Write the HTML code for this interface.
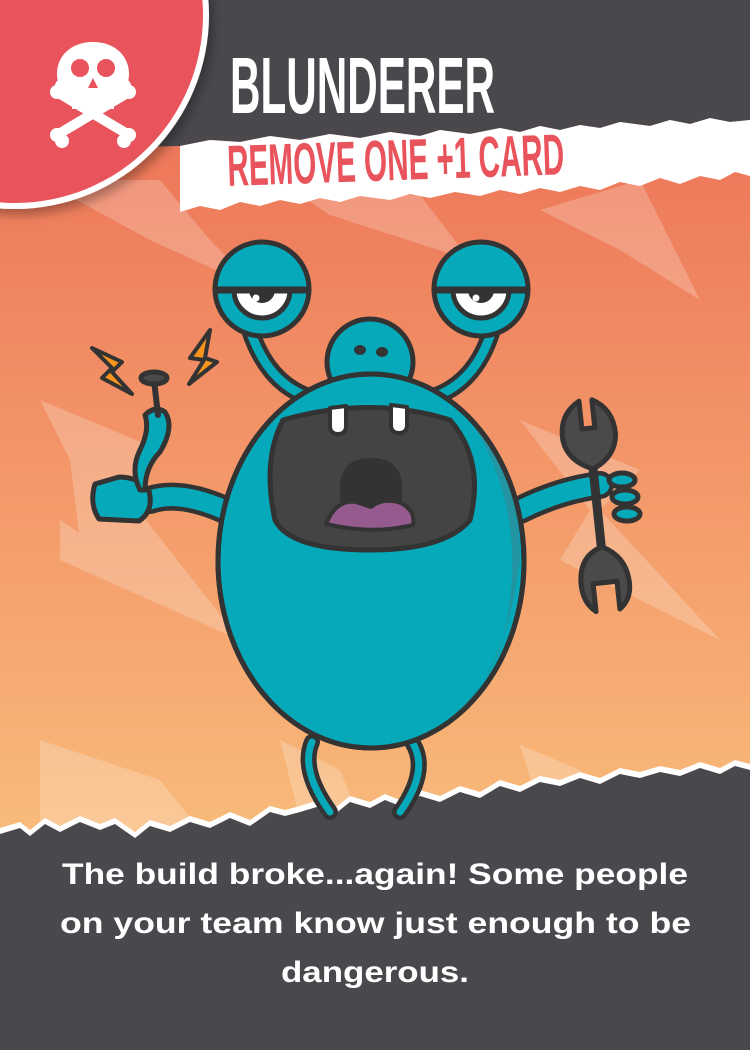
<!DOCTYPE html>
<html><head><meta charset="utf-8"><style>
html,body{margin:0;padding:0;width:750px;height:1050px;overflow:hidden;background:#4a484d}
svg{display:block}
.t{font-family:"Liberation Sans",sans-serif;font-weight:bold}
.d{font-family:"Liberation Sans",sans-serif;font-weight:bold;font-size:30px;fill:#fff}
</style></head><body>
<svg width="750" height="1050" viewBox="0 0 750 1050">
<defs>
<linearGradient id="bg" x1="0" y1="0" x2="0" y2="1">
<stop offset="0" stop-color="#ed7558"/><stop offset="1" stop-color="#f9bb7a"/>
</linearGradient>
<filter id="sh"><feDropShadow dx="4" dy="6" stdDeviation="5" flood-opacity="0.3"/></filter>
</defs>
<rect width="750" height="1050" fill="#4a484d"/>
<rect y="120" width="750" height="720" fill="url(#bg)"/>
<g fill="#fff" opacity="0.22">
<polygon points="40,180 160,180 210,240 260,290 150,240"/>
<polygon points="300,195 420,195 470,260 330,215"/>
<polygon points="540,210 640,180 700,300 620,250"/>
<polygon points="40,400 160,450 130,500 240,640 80,540 70,460"/>
<polygon points="60,520 240,640 60,560"/>
<polygon points="520,420 640,470 600,510 720,640 560,560 590,510"/>
<polygon points="40,740 160,780 200,830 40,830"/>
<polygon points="280,740 340,770 360,820 300,820"/>
<polygon points="520,745 580,770 600,810 540,810"/>
</g>
<path d="M0,828 L20,822 30,830 45,818 60,826 80,816 100,824 115,818 135,832 150,820 170,826 190,816 210,822 230,812 250,820 270,806 285,810 300,806 320,800 335,808 350,796 370,802 385,794 400,800 420,790 440,796 460,786 480,792 500,780 520,786 540,776 560,780 580,772 600,778 620,768 640,772 660,766 680,770 700,762 720,768 735,760 750,764 L750,1050 0,1050Z" fill="#fff"/>
<path d="M0,834 L20,828 30,836 45,824 60,832 80,822 100,830 115,824 135,838 150,826 170,832 190,822 210,828 230,818 250,826 270,812 285,816 300,812 320,806 335,814 350,802 370,808 385,800 400,806 420,796 440,802 460,792 480,798 500,786 520,792 540,782 560,786 580,778 600,784 620,774 640,778 660,772 680,776 700,768 720,774 735,766 750,770 L750,1050 0,1050Z" fill="#4a484d"/>
<path d="M0,0 H750 V120 L730,122 710,118 690,124 670,120 650,126 620,122 600,128 580,125 560,130 540,126 520,132 500,128 470,134 440,130 420,136 390,132 360,138 330,134 300,140 270,136 240,142 210,140 180,146 0,150Z" fill="#4a484d"/>
<path d="M180,146 L210,140 240,142 270,136 300,140 330,134 360,138 390,132 420,136 440,130 470,134 500,128 520,132 540,126 560,130 580,125 600,128 620,122 650,126 670,120 690,124 710,118 730,122 750,120 V176 L735,172 720,180 700,176 680,184 660,178 640,186 620,182 600,190 580,186 560,192 540,188 520,194 500,190 480,196 455,192 430,198 410,194 390,200 360,196 340,202 320,198 300,204 280,200 260,206 240,202 220,210 200,206 180,212Z" fill="#fff"/>
<text x="230" y="113" class="t" font-size="80" fill="#fff" textLength="265" lengthAdjust="spacingAndGlyphs">BLUNDERER</text>
<text x="228" y="186" class="t" font-size="58" fill="#e8535c" textLength="337" lengthAdjust="spacingAndGlyphs" transform="rotate(-2 228 186)">REMOVE ONE +1 CARD</text>
<g filter="url(#sh)"><circle cx="15" cy="15" r="194" fill="#fff"/></g>
<circle cx="15" cy="15" r="188" fill="#e8535c"/>
<g fill="#fff">
<path d="M93,42 c-22,0 -36,14 -36,32 c0,12 7,20 15,25 v10 h42 v-10 c8,-5 15,-13 15,-25 c0,-18 -14,-32 -36,-32z"/>
<g stroke="#fff" stroke-width="10" stroke-linecap="round"><line x1="62" y1="95" x2="124" y2="132"/><line x1="124" y1="95" x2="62" y2="132"/></g>
<circle cx="57" cy="92" r="7"/><circle cx="62" cy="86" r="7"/><circle cx="129" cy="92" r="7"/><circle cx="124" cy="86" r="7"/>
<circle cx="57" cy="135" r="7"/><circle cx="62" cy="141" r="7"/><circle cx="129" cy="135" r="7"/><circle cx="124" cy="141" r="7"/>
</g>
<g fill="#e8535c"><circle cx="80" cy="68" r="9"/><circle cx="106" cy="68" r="9"/><path d="M93,78 l-5,10 h10z"/></g>
<g stroke="#333" stroke-width="5" stroke-linejoin="round" stroke-linecap="round">
<path d="M250,330 Q270,390 320,400" fill="none" stroke="#333" stroke-width="18"/>
<path d="M250,330 Q270,390 320,400" fill="none" stroke="#05a9b9" stroke-width="9"/>
<path d="M492,330 Q475,385 430,398" fill="none" stroke="#333" stroke-width="18"/>
<path d="M492,330 Q475,385 430,398" fill="none" stroke="#05a9b9" stroke-width="9"/>
<path d="M312,742 Q300,770 330,812" fill="none" stroke="#333" stroke-width="16"/>
<path d="M312,742 Q300,770 330,812" fill="none" stroke="#05a9b9" stroke-width="7"/>
<path d="M412,742 Q430,770 400,812" fill="none" stroke="#333" stroke-width="16"/>
<path d="M412,742 Q430,770 400,812" fill="none" stroke="#05a9b9" stroke-width="7"/>
<path d="M225,510 Q180,490 150,500" fill="none" stroke="#333" stroke-width="28"/>
<path d="M225,510 Q180,490 150,500" fill="none" stroke="#05a9b9" stroke-width="19"/>
<path d="M520,510 Q560,490 600,485" fill="none" stroke="#333" stroke-width="28"/>
<path d="M520,510 Q560,490 600,485" fill="none" stroke="#05a9b9" stroke-width="19"/>
<path d="M95,484 q-6,20 4,35 l40,2 q15,-10 10,-30 q-10,-14 -30,-14z" fill="#05a9b9"/>
<path d="M140,490 q-10,-20 0,-40 q10,-20 5,-35 q10,-10 20,-3 q10,15 -5,40 q-15,15 -15,38z" fill="#05a9b9"/>
<path d="M158,415 l-4,-35" stroke="#333" stroke-width="6"/>
<ellipse cx="154" cy="378" rx="13" ry="6" fill="#4a4a4a"/>
<path d="M92,348 l30,14 -10,10 20,22 -30,-16 10,-10z M210,330 l-20,28 14,2 -15,24 28,-22 -12,-4z" fill="#f7941d" stroke-width="4"/>
<g transform="rotate(-6 615 505)">
<path d="M590,398 q-22,12 -20,38 q3,20 25,30 v80 q-22,8 -22,35 q0,18 12,28 v-28 h24 v28 q14,-10 12,-30 q-2,-22 -22,-33 v-80 q22,-10 24,-32 q0,-25 -20,-36 v28 h-13z" fill="#4a4a4a" stroke-width="5"/>
</g>
<ellipse cx="622" cy="480" rx="13" ry="7" fill="#05a9b9"/>
<ellipse cx="625" cy="497" rx="13" ry="7" fill="#05a9b9"/>
<ellipse cx="627" cy="514" rx="13" ry="7" fill="#05a9b9"/>
<circle cx="370" cy="362" r="43" fill="#05a9b9"/>
<ellipse cx="371" cy="561" rx="153" ry="187" fill="#05a9b9"/>
<path d="M470,420 Q535,520 500,650 Q470,720 400,745 Q500,720 520,560 Q520,470 470,420z" fill="#2394a1" stroke="none"/>
<ellipse cx="371" cy="561" rx="153" ry="187" fill="none"/>
<path d="M283,420 Q370,395 450,420 Q485,460 470,520 Q445,550 370,550 Q290,550 275,520 Q262,460 283,420z" fill="#444"/>
<path d="M340,488 q0,-30 31,-30 q31,0 31,30 v30 h-62z" fill="#333" stroke="none"/>
<path d="M326,524 q10,-25 30,-22 q15,5 15,5 q12,-10 30,-4 q15,8 12,22 q-40,10 -87,-1z" fill="#955b8f" stroke="#333" stroke-width="4"/>
<path d="M330,408 v18 q0,8 8,8 q8,0 8,-8 v-20z M391,405 v20 q0,8 8,8 q8,0 8,-8 v-18z" fill="#fff" stroke-width="4"/>
<ellipse cx="360" cy="350" rx="6" ry="5" fill="#333" stroke="none"/>
<ellipse cx="382" cy="352" rx="6" ry="5" fill="#333" stroke="none"/>
<circle cx="262" cy="289" r="47" fill="#05a9b9"/>
<circle cx="481" cy="289" r="47" fill="#05a9b9"/>
<path d="M234,290 a28,28 0 0 0 56,0z" fill="#fff"/>
<path d="M453,290 a28,28 0 0 0 56,0z" fill="#fff"/>
<path d="M249,290 a13,13 0 0 0 26,0z" fill="#333" stroke="none"/>
<path d="M468,290 a13,13 0 0 0 26,0z" fill="#333" stroke="none"/>
<line x1="216" y1="290" x2="308" y2="290" stroke-width="7"/>
<line x1="435" y1="290" x2="527" y2="290" stroke-width="7"/>
<circle cx="256" cy="298" r="3.5" fill="#fff" stroke="none"/>
<circle cx="476" cy="298" r="3.5" fill="#fff" stroke="none"/>
</g>
<text class="d" x="62" y="884" textLength="626" lengthAdjust="spacingAndGlyphs">The build broke...again! Some people</text>
<text class="d" x="60" y="933" textLength="631" lengthAdjust="spacingAndGlyphs">on your team know just enough to be</text>
<text class="d" x="281" y="982" textLength="188" lengthAdjust="spacingAndGlyphs">dangerous.</text>
</svg>
</body></html>
